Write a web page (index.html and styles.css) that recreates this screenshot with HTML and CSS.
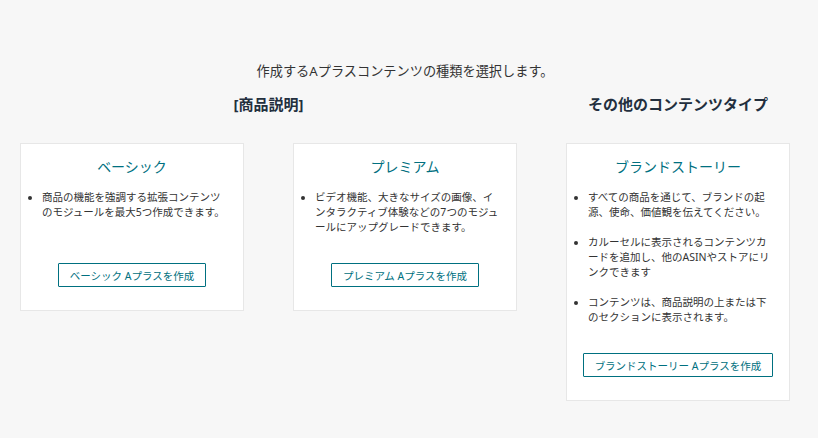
FILE: index.html
```
<!DOCTYPE html>
<html>
<head>
    <title>Aプラスコンテンツ</title>
    <link rel="stylesheet" href="styles.css">
</head>
<body>
    <div class="page">
        <p class="intro">作成するAプラスコンテンツの種類を選択します。</p>
        <div class="sections">
            <div class="group">
                <h3>[商品説明]</h3>
                <div class="cards">
                    <div class="card">
                        <h4>ベーシック</h4>
                        <ul>
                            <li>商品の機能を強調する拡張コンテンツのモジュールを最大5つ作成できます。</li>
                        </ul>
                        <button>ベーシック Aプラスを作成</button>
                    </div>
                    <div class="card">
                        <h4>プレミアム</h4>
                        <ul>
                            <li>ビデオ機能、大きなサイズの画像、インタラクティブ体験などの7つのモジュールにアップグレードできます。</li>
                        </ul>
                        <button>プレミアム Aプラスを作成</button>
                    </div>
                </div>
            </div>
            <div class="group">
                <h3>その他のコンテンツタイプ</h3>
                <div class="cards">
                    <div class="card">
                        <h4>ブランドストーリー</h4>
                        <ul>
                            <li>すべての商品を通じて、ブランドの起源、使命、価値観を伝えてください。</li>
                            <li>カルーセルに表示されるコンテンツカードを追加し、他のASINやストアにリンクできます</li>
                            <li>コンテンツは、商品説明の上または下のセクションに表示されます。</li>
                        </ul>
                        <button>ブランドストーリー Aプラスを作成</button>
                    </div>
                </div>
            </div>
        </div>
    </div>
</body>
</html>
```

FILE: styles.css
```
body {
    margin: 0;
    background-color: #f7f7f7;
    font-family: "Noto Sans", "Noto Sans CJK JP", sans-serif;
    color: #333;
}
.page {
    padding: 61px 28px 0 20px;
}
.intro {
    margin: 0;
    text-align: center;
    font-size: 13.2px;
    line-height: 20px;
}
.sections {
    display: flex;
    gap: 49px;
    margin-top: 13px;
    align-items: flex-start;
}
.group h3 {
    margin: 0 0 29px;
    text-align: center;
    font-size: 15px;
    line-height: 20px;
    color: #232f3e;
}
.cards {
    display: flex;
    gap: 49px;
}
.card {
    width: 224px;
    box-sizing: border-box;
    background: #fff;
    border: 1px solid #e7e7e7;
    padding: 13px 0 23px;
    display: flex;
    flex-direction: column;
    align-items: center;
}
.card h4 {
    margin: 0 0 13px;
    font-size: 14px;
    line-height: 20px;
    font-weight: normal;
    color: #007080;
}
.card ul {
    align-self: stretch;
    margin: 0 0 13px;
    padding: 0 13px 0 21px;
    font-size: 10.5px;
    line-height: 15px;
}
.card li {
    margin-bottom: 15px;
}
.card button {
    margin-top: auto;
    height: 24px;
    padding: 0 11px;
    background: #fff;
    border: 1px solid #007080;
    border-radius: 1px;
    color: #007080;
    font-family: inherit;
    font-size: 10.5px;
    cursor: pointer;
}
```
